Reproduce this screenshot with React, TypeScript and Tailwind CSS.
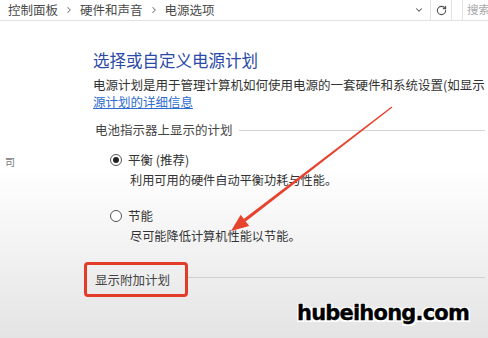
import { ChevronDown, ChevronRight, RotateCw } from 'lucide-react';

const cjk = { fontFamily: '"Noto Sans CJK SC", "Noto Sans", sans-serif' };

function Radio({ checked }: { checked?: boolean }) {
  return (
    <span className="flex h-[12px] w-[12px] items-center justify-center rounded-full border border-[#555] bg-white">
      {checked && <span className="h-[6px] w-[6px] rounded-full bg-[#222]" />}
    </span>
  );
}

// Red annotation arrow drawn over the page
function Arrow() {
  return (
    <svg className="pointer-events-none absolute left-0 top-0" width="488" height="338" viewBox="0 0 488 338">
      <polygon points="392.4,107.5 391.6,106.5 243.7,219.0 245.7,221.6" fill="#e5432d" />
      <polygon points="231,231 249.2,225.9 240.7,214.7" fill="#e5432d" />
    </svg>
  );
}

export default function App() {
  return (
    <div
      className="relative flex h-[338px] w-[488px] flex-col overflow-hidden bg-linear-to-b from-white from-50% to-[#e4e4e4] text-[#333]"
      style={cjk}
    >
      {/* address bar */}
      <div className="flex h-[21px] items-stretch border-b border-[#e2e2e2] text-[12.5px] text-[#4a4a4a]">
        <div className="flex flex-1 items-center pl-[8px] pr-[6px]">
          <span>控制面板</span>
          <ChevronRight className="mx-[6px] h-[10px] w-[10px] text-[#777]" strokeWidth={2.5} />
          <span>硬件和声音</span>
          <ChevronRight className="mx-[6px] h-[10px] w-[10px] text-[#777]" strokeWidth={2.5} />
          <span>电源选项</span>
          <ChevronDown className="ml-auto h-[10px] w-[10px] text-[#555]" strokeWidth={2.5} />
        </div>
        <div className="flex w-[22px] items-center justify-center border-x border-[#e2e2e2]">
          <RotateCw className="h-[11px] w-[11px] text-[#555]" strokeWidth={2.5} />
        </div>
        <div className="ml-[10px] flex w-[26px] items-center overflow-hidden border-l border-[#e2e2e2] pl-[4px] text-[11.5px] text-[#aaa]">
          <span className="whitespace-nowrap">搜索</span>
        </div>
      </div>

      <div className="flex flex-1">
        {/* left pane, mostly cut off */}
        <div className="w-[93px] pl-[5px] pt-[133px] text-[10px] text-[#777]">司</div>

        {/* main */}
        <div className="flex w-[392px] flex-col pt-[29px]">
          <h1 className="text-[16.5px] leading-[20px] text-[#2b49a6]">选择或自定义电源计划</h1>
          <p className="mt-[6px] overflow-hidden whitespace-nowrap text-[12.5px] leading-[17px] text-[#333]">
            电源计划是用于管理计算机如何使用电源的一套硬件和系统设置(如显示
          </p>
          <a className="w-fit text-[12.5px] leading-[17px] text-[#2d6bd0] underline">源计划的详细信息</a>

          <div className="mt-[11px] flex items-center pl-[2px]">
            <span className="text-[12.5px] leading-[17px] text-[#444]">电池指示器上显示的计划</span>
            <span className="ml-[6px] mt-[2px] h-px flex-1 bg-[#d4d4d4]" />
          </div>

          <div className="mt-[13px] flex items-center pl-[17px]">
            <Radio checked />
            <span className="ml-[6px] text-[12.5px] leading-[17px] text-[#333]">平衡 (推荐)</span>
          </div>
          <p className="mt-[4px] pl-[37px] text-[12.2px] leading-[17px] text-[#333]">利用可用的硬件自动平衡功耗与性能。</p>

          <div className="mt-[18px] flex items-center pl-[17px]">
            <Radio />
            <span className="ml-[6px] text-[12.5px] leading-[17px] text-[#333]">节能</span>
          </div>
          <p className="mt-[4px] pl-[37px] text-[12.2px] leading-[17px] text-[#333]">尽可能降低计算机性能以节能。</p>

          <div className="-ml-[9px] mt-[17px] flex items-center">
            <div className="flex h-[35px] w-[104px] items-center rounded-[4px] border-[3px] border-[#e23b28] pl-[8px]">
              <span className="text-[12.5px] leading-[17px] text-[#444]">显示附加计划</span>
            </div>
            <span className="-mt-[4px] h-px flex-1 bg-[#cfcfcf]" />
          </div>
        </div>
      </div>

      <Arrow />

      {/* watermark */}
      <div
        className="absolute left-[297px] top-[298px] text-[21px] font-bold tracking-[-0.8px] text-black"
        style={{
          fontFamily: '"DejaVu Sans", sans-serif',
          WebkitTextStroke: '0.35px #000',
          textShadow: '1.5px 1.5px 0 #fff, -1.5px -1.5px 0 #fff, 1.5px -1.5px 0 #fff, -1.5px 1.5px 0 #fff',
        }}
      >
        hubeihong.com
      </div>
    </div>
  );
}
